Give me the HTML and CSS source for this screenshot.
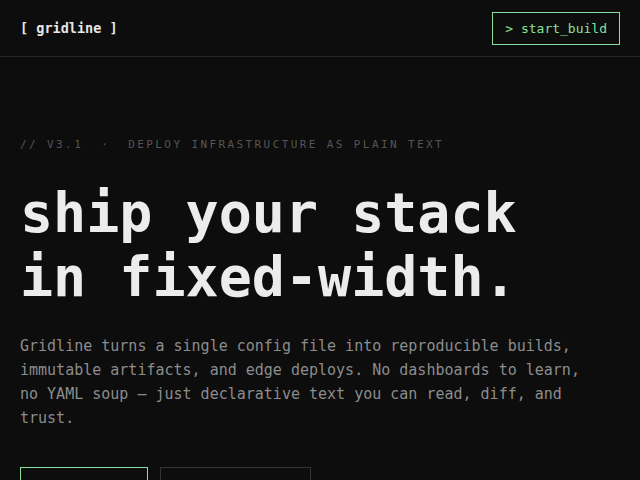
FILE: index.html
```html
<!DOCTYPE html>
<html lang="en">
<head>
    <meta charset="UTF-8">
    <meta name="viewport" content="width=device-width, initial-scale=1.0">
    <title>gridline</title>
    <link rel="stylesheet" href="styles.css">
</head>
<body>
    <header class="topbar">
        <a class="logo" href="#">[ gridline ]</a>
        <a class="btn btn-primary" href="#">&gt; start_build</a>
    </header>

    <main class="hero">
        <p class="eyebrow">// V3.1  &middot;  DEPLOY INFRASTRUCTURE AS PLAIN TEXT</p>
        <h1 class="headline">ship your stack<br>in fixed-width.</h1>
        <p class="lead">Gridline turns a single config file into reproducible builds, immutable artifacts, and edge deploys. No dashboards to learn, no YAML soup &mdash; just declarative text you can read, diff, and trust.</p>
        <div class="actions">
            <a class="btn btn-primary btn-lg" href="#">&gt; start_build</a>
            <a class="btn btn-ghost btn-lg" href="#">read_the_docs -&gt;</a>
        </div>
    </main>
</body>
</html>
```

FILE: styles.css
```css
body {
    font-family: "DejaVu Sans Mono", "Liberation Mono", monospace;
    background-color: #0d0d0d;
    color: #e8e8e8;
    margin: 0;
}

a {
    text-decoration: none;
}

.topbar {
    display: flex;
    align-items: center;
    justify-content: space-between;
    height: 56px;
    padding: 0 20px;
    border-bottom: 1px solid #262626;
}

.logo {
    color: #e6e6e6;
    font-size: 13.5px;
    font-weight: bold;
    white-space: pre;
}

.btn {
    display: inline-block;
    font-size: 13px;
    line-height: 19px;
    padding: 6px 12px;
    border: 1px solid #333;
    color: #bdbdbd;
}

.btn-lg {
    padding-top: 14px;
    padding-bottom: 14px;
}

.btn-primary {
    border-color: #88e09c;
    color: #88e09c;
}

.hero {
    padding: 80px 20px 40px;
}

.eyebrow {
    margin: 0 0 28px;
    font-size: 11px;
    line-height: 16px;
    letter-spacing: 2.4px;
    color: #555;
    white-space: pre;
}

.headline {
    margin: 0 0 25px;
    font-size: 55px;
    line-height: 64px;
    font-weight: bold;
    color: #ececec;
}

.lead {
    margin: 0 0 37px;
    max-width: 570px;
    font-size: 15px;
    line-height: 24px;
    color: #8c8c8c;
}

.actions {
    display: flex;
    gap: 12px;
}
```
